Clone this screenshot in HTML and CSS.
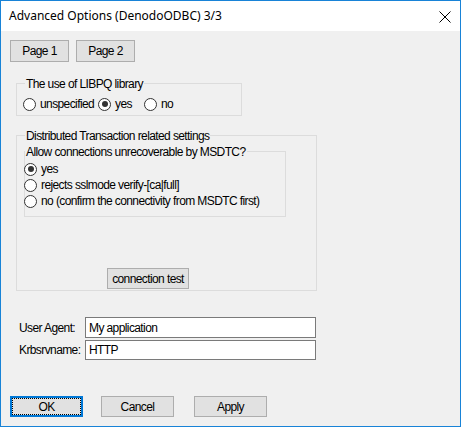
FILE: index.html
```html
<!DOCTYPE html>
<html>
<head>
<meta charset="utf-8">
<link rel="stylesheet" href="styles.css">
</head>
<body>
<div class="window">
  <div class="titlebar">
    <span class="title">Advanced Options (DenodoODBC) 3/3</span>
    <svg class="close" width="12" height="12" viewBox="0 0 12 12"><path d="M0.5 0.5 L11.5 11.5 M11.5 0.5 L0.5 11.5" stroke="#000" stroke-width="1" fill="none"/></svg>
  </div>
  <div class="client">
    <div class="pages">
      <button class="btn page-btn">Page 1</button>
      <button class="btn page-btn">Page 2</button>
    </div>

    <div class="grp grp-libpq">
      <span class="legend">The use of LIBPQ library</span>
      <div class="radio-line">
        <label class="radio r-unspec"><span class="dot"></span>unspecified</label>
        <label class="radio r-yes"><span class="dot checked"></span>yes</label>
        <label class="radio r-no"><span class="dot"></span>no</label>
      </div>
    </div>

    <div class="grp grp-dtc">
      <span class="legend">Distributed Transaction related settings</span>
      <div class="grp grp-msdtc">
        <span class="legend legend-tight">Allow connections unrecoverable by MSDTC?</span>
        <div class="radio-col">
          <label class="radio"><span class="dot checked"></span>yes</label>
          <label class="radio"><span class="dot"></span>rejects sslmode verify-[ca|full]</label>
          <label class="radio"><span class="dot"></span>no (confirm the connectivity from MSDTC first)</label>
        </div>
      </div>
      <button class="btn test-btn">connection test</button>
    </div>

    <div class="fields">
      <div class="field-row row1">
        <span class="field-label">User Agent:</span>
        <span class="input">My application</span>
      </div>
      <div class="field-row row2">
        <span class="field-label">Krbsrvname:</span>
        <span class="input">HTTP</span>
      </div>
    </div>

    <div class="actions">
      <button class="btn act-btn default">OK</button>
      <button class="btn act-btn cancel">Cancel</button>
      <button class="btn act-btn apply">Apply</button>
    </div>
  </div>
</div>
</body>
</html>
```
FILE: styles.css
```css
html, body {
  margin: 0;
  padding: 0;
  background: #f0f0f0;
}
.window {
  width: 461px;
  height: 427px;
  box-sizing: border-box;
  border: 1px solid #1883d7;
  background: #f0f0f0;
  font-family: "Liberation Sans", Arial, sans-serif;
  font-size: 12px;
  letter-spacing: -0.6px;
  color: #000;
  overflow: hidden;
  white-space: nowrap;
}
.titlebar {
  height: 30px;
  background: #fff;
  display: flex;
  align-items: center;
  justify-content: space-between;
  padding: 0 9px 0 8px;
}
.title {
  font-family: "Noto Sans", "Open Sans", sans-serif;
  font-size: 12px;
  letter-spacing: 0;
  line-height: 30px;
}
.close {
  display: block;
  margin-top: 1px;
}
.client {
  padding: 9px 0 0 9px;
}
.btn {
  font-family: "Liberation Sans", Arial, sans-serif;
  font-size: 12px;
  letter-spacing: -0.6px;
  white-space: nowrap;
  color: #000;
  background: #e1e1e1;
  border: 1px solid #adadad;
  margin: 0;
  padding: 0;
  box-sizing: border-box;
  display: flex;
  align-items: center;
  justify-content: center;
  line-height: 14px;
}
.pages {
  display: flex;
  gap: 7px;
}
.page-btn {
  width: 59px;
  height: 22px;
}
.grp {
  border: 1px solid #dcdcdc;
  box-sizing: border-box;
}
.legend {
  display: block;
  width: fit-content;
  line-height: 14px;
  margin: -7px 0 0 8px;
  padding: 0 1px;
  background: #f0f0f0;
}
.legend-tight {
  margin-left: 0;
}
.grp-libpq {
  margin: 21px 0 0 6px;
  width: 226px;
  height: 33px;
}
.radio {
  display: flex;
  align-items: center;
  height: 16px;
  line-height: 14px;
}
.dot {
  width: 13px;
  height: 13px;
  box-sizing: border-box;
  border: 1px solid #333;
  border-radius: 50%;
  background: #fff;
  margin-right: 4px;
  flex: none;
  display: flex;
  align-items: center;
  justify-content: center;
}
.dot.checked::after {
  content: "";
  width: 6px;
  height: 6px;
  border-radius: 50%;
  background: #333;
}
.radio-line {
  display: flex;
  margin: 5px 0 0 6px;
}
.r-unspec { width: 75px; }
.r-yes { width: 46px; }
.grp-dtc {
  margin: 19px 0 0 6px;
  width: 301px;
  height: 156px;
}
.grp-msdtc {
  margin: 8px 0 0 7px;
  width: 262px;
  height: 66px;
}
.radio-col {
  display: flex;
  flex-direction: column;
  margin: 2px 0 0 -1px;
}
.test-btn {
  margin: 51px 0 0 90px;
  width: 82px;
  height: 21px;
}
.fields {
  margin: 26px 0 0 9px;
  display: flex;
  flex-direction: column;
  gap: 2px;
}
.field-row {
  display: flex;
  align-items: center;
}
.field-label {
  width: 66px;
}
.input {
  width: 231px;
  box-sizing: border-box;
  border: 1px solid #7a7a7a;
  background: #fff;
  padding-left: 3px;
  display: flex;
  align-items: center;
}
.row1 .input { height: 21px; }
.row2 .input { height: 20px; }
.actions {
  display: flex;
  margin-top: 36px;
}
.act-btn {
  width: 73px;
  height: 21px;
}
.default {
  border: 2px solid #0078d7;
  outline: 1px dotted #000;
  outline-offset: -3px;
}
.cancel { margin-left: 18px; }
.apply { margin-left: 20px; }
```
